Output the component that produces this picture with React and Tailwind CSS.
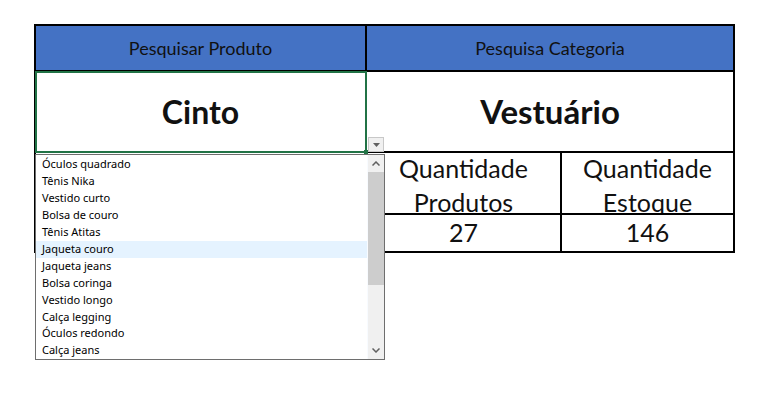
import React from "react";

const items = [
  "Óculos quadrado",
  "Tênis Nika",
  "Vestido curto",
  "Bolsa de couro",
  "Tênis Atitas",
  "Jaqueta couro",
  "Jaqueta jeans",
  "Bolsa coringa",
  "Vestido longo",
  "Calça legging",
  "Óculos redondo",
  "Calça jeans",
];

export default function App() {
  return (
    <div className="relative w-[774px] h-[400px] bg-white overflow-hidden">
      <div className="pt-6 pl-[34px]">
        <div
          className="w-[701px] border-2 border-black text-[#111]"
          style={{ fontFamily: "Lato, 'Open Sans', sans-serif" }}
        >
          {/* header row */}
          <div className="flex h-[46px] border-b-2 border-black bg-[#4472c4]">
            <div className="w-[331px] border-r-2 border-black flex items-center justify-center text-[18px]">
              Pesquisar Produto
            </div>
            <div className="flex-1 flex items-center justify-center text-[18px]">
              Pesquisa Categoria
            </div>
          </div>
          {/* value row */}
          <div className="flex h-[81px] border-b-2 border-black">
            <div className="w-[331px] border-r-2 border-black flex items-center justify-center text-[32px] font-bold">
              Cinto
            </div>
            <div className="flex-1 flex items-center justify-center text-[33px] font-bold">
              Vestuário
            </div>
          </div>
          {/* labels row */}
          <div className="flex h-[62px] border-b-2 border-black">
            <div className="w-[331px] border-r-2 border-black"></div>
            <div className="w-[195px] border-r-2 border-black overflow-hidden text-center text-[25px] leading-[34px]">
              <div className="-mt-[2px]">Quantidade</div>
              <div>Produtos</div>
            </div>
            <div className="flex-1 overflow-hidden text-center text-[25px] leading-[34px]">
              <div className="-mt-[2px]">Quantidade</div>
              <div>Estoque</div>
            </div>
          </div>
          {/* numbers row */}
          <div className="flex h-[36px]">
            <div className="w-[331px] border-r-2 border-black"></div>
            <div className="w-[195px] border-r-2 border-black flex items-center justify-center text-[25px]">
              27
            </div>
            <div className="flex-1 flex items-center justify-center text-[25px]">
              146
            </div>
          </div>
        </div>
      </div>

      {/* selection box */}
      <div className="absolute left-[35px] top-[71px] w-[332px] h-[82px] border-2 border-[#217346]"></div>
      <div className="absolute left-[364px] top-[150px] w-[4px] h-[4px] bg-[#217346]"></div>

      {/* dropdown button */}
      <div className="absolute left-[368px] top-[137px] w-[16px] h-[15px] bg-[#f0f0f0] border border-[#c8c8c8] flex items-center justify-center">
        <svg width="7" height="4" viewBox="0 0 7 4">
          <path d="M0 0 H7 L3.5 4 Z" fill="#606060" />
        </svg>
      </div>

      {/* dropdown list */}
      <div
        className="absolute left-[35px] top-[154px] w-[350px] h-[206px] border border-[#6e6e6e] bg-white flex"
        style={{ fontFamily: "'Noto Sans', 'Open Sans', sans-serif" }}
      >
        <div className="flex-1 flex flex-col pt-[1px]">
          {items.map((it, i) => (
            <div
              key={it}
              className={
                "h-[17px] pl-[6px] flex items-center text-[11px] text-black " +
                (i === 5 ? "bg-[#e5f3ff]" : "")
              }
            >
              {it}
            </div>
          ))}
        </div>
        <div className="w-[17px] bg-[#f0f0f0] border-l border-[#f8fbff] flex flex-col">
          <div className="h-[17px] flex items-center justify-center">
            <svg width="8" height="5" viewBox="0 0 8 5">
              <path d="M0.5 4.5 L4 1 L7.5 4.5" stroke="#606060" strokeWidth="1.5" fill="none" />
            </svg>
          </div>
          <div className="h-[113px] bg-[#cdcdcd]"></div>
          <div className="flex-1"></div>
          <div className="h-[17px] flex items-center justify-center">
            <svg width="8" height="5" viewBox="0 0 8 5">
              <path d="M0.5 0.5 L4 4 L7.5 0.5" stroke="#606060" strokeWidth="1.5" fill="none" />
            </svg>
          </div>
        </div>
      </div>
    </div>
  );
}
